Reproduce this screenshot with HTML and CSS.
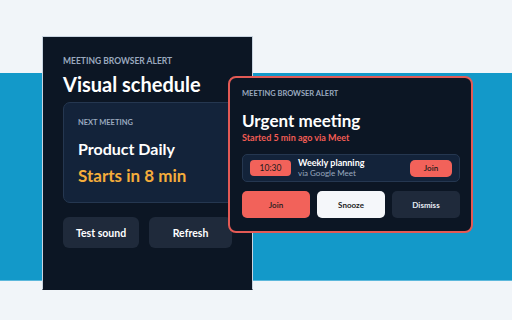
FILE: index.html
```html
<!DOCTYPE html>
<html>
<head>
<meta charset="utf-8">
<link rel="stylesheet" href="styles.css">
</head>
<body>
<div class="stage">
  <div class="band"></div>
  <section class="panel">
    <div class="eyebrow">MEETING BROWSER ALERT</div>
    <h1 class="title">Visual schedule</h1>
    <div class="card">
      <div class="card-label">NEXT MEETING</div>
      <div class="card-name">Product Daily</div>
      <div class="card-when">Starts in 8 min</div>
    </div>
    <div class="actions">
      <button class="btn btn-test">Test sound</button>
      <button class="btn btn-refresh">Refresh</button>
    </div>
  </section>
  <section class="alert">
    <div class="eyebrow eyebrow-sm">MEETING BROWSER ALERT</div>
    <h2 class="alert-title">Urgent meeting</h2>
    <div class="alert-sub">Started 5 min ago via Meet</div>
    <div class="row">
      <span class="time">10:30</span>
      <div class="row-info">
        <div class="row-name">Weekly planning</div>
        <div class="row-via">via Google Meet</div>
      </div>
      <span class="row-join">Join</span>
    </div>
    <div class="alert-actions">
      <button class="abtn abtn-join">Join</button>
      <button class="abtn abtn-snooze">Snooze</button>
      <button class="abtn abtn-dismiss">Dismiss</button>
    </div>
  </section>
</div>
</body>
</html>
```
FILE: styles.css
```css
* { box-sizing: border-box; margin: 0; padding: 0; }
html, body { width: 512px; height: 320px; overflow: hidden; }
body { background: #f1f5f9; font-family: "Lato", "Noto Sans", sans-serif; color: #fff; }
.stage { position: relative; width: 512px; height: 320px; padding-top: 73px; }
.band { height: 208px; background: #1399c9; border-bottom: 1px solid #5bb8dc; }

.panel {
  position: absolute; left: 42px; top: 36px; width: 211px; height: 254px;
  background: #0c1624; border: 1px solid #c9d4e0; border-bottom-color: #0c1624;
  padding: 19px 20px 0 20px;
}
.eyebrow { font-size: 8.5px; font-weight: 700; color: #9aa9bf; line-height: 11px; }
.title { font-size: 20px; font-weight: 700; line-height: 24px; margin-top: 5px; }
.card {
  margin-top: 6px; width: 200px; height: 101px;
  background: #13233a; border: 1px solid #253750; border-radius: 7px;
  padding: 15px 14px;
}
.card-label { font-size: 7.5px; font-weight: 700; color: #9aa9bf; line-height: 10px; }
.card-name { font-size: 16px; font-weight: 700; line-height: 20px; margin-top: 11px; }
.card-when { font-size: 17px; font-weight: 700; line-height: 22px; margin-top: 6px; color: #f5ad3b; }
.actions { display: flex; gap: 10px; margin-top: 14px; }
.btn {
  height: 31px; border: none; border-radius: 6px; background: #1f2a3b;
  color: #fff; font-family: inherit; font-size: 10.5px; font-weight: 700;
}
.btn-test { width: 77px; }
.btn-refresh { width: 84px; }

.alert {
  position: absolute; left: 228px; top: 76px; width: 245px; height: 157px;
  background: #0c1624; border: 2px solid #e35a55; border-radius: 8px;
  padding: 11px 11px 0 12px;
}
.eyebrow-sm { font-size: 7.5px; line-height: 10px; }
.alert-title { font-size: 17px; font-weight: 700; line-height: 20px; margin-top: 12px; }
.alert-sub { font-size: 9px; font-weight: 700; color: #f25c54; line-height: 12px; margin-top: 1px; }
.row {
  display: flex; align-items: center; margin-top: 10px; height: 28px;
  background: #13233a; border: 1px solid #253750; border-radius: 5px;
  padding: 0 7px 0 7px;
}
.time {
  width: 41px; height: 16px; border-radius: 4px; background: #f2625a; color: #1b1b1b;
  font-size: 8.5px; display: flex; align-items: center; justify-content: center;
}
.row-info { flex: 1; margin-left: 7px; }
.row-name { font-size: 9px; font-weight: 700; line-height: 11px; }
.row-via { font-size: 8px; color: #9aa9bf; line-height: 11px; }
.row-join {
  width: 42px; height: 17px; border-radius: 5px; background: #f2625a; color: #1b1b1b;
  font-size: 8px; font-weight: 600; display: flex; align-items: center; justify-content: center;
}
.alert-actions { display: flex; gap: 7px; margin-top: 9px; }
.abtn {
  width: 68px; height: 27px; border-radius: 5px; border: none;
  font-family: inherit; font-size: 8px; font-weight: 700;
}
.abtn-join { background: #f2625a; color: #1b1b1b; font-weight: 600; }
.abtn-snooze { background: #f5f7fa; color: #1b1b1b; }
.abtn-dismiss { background: #1f2a3b; color: #e6ebf2; }
```
